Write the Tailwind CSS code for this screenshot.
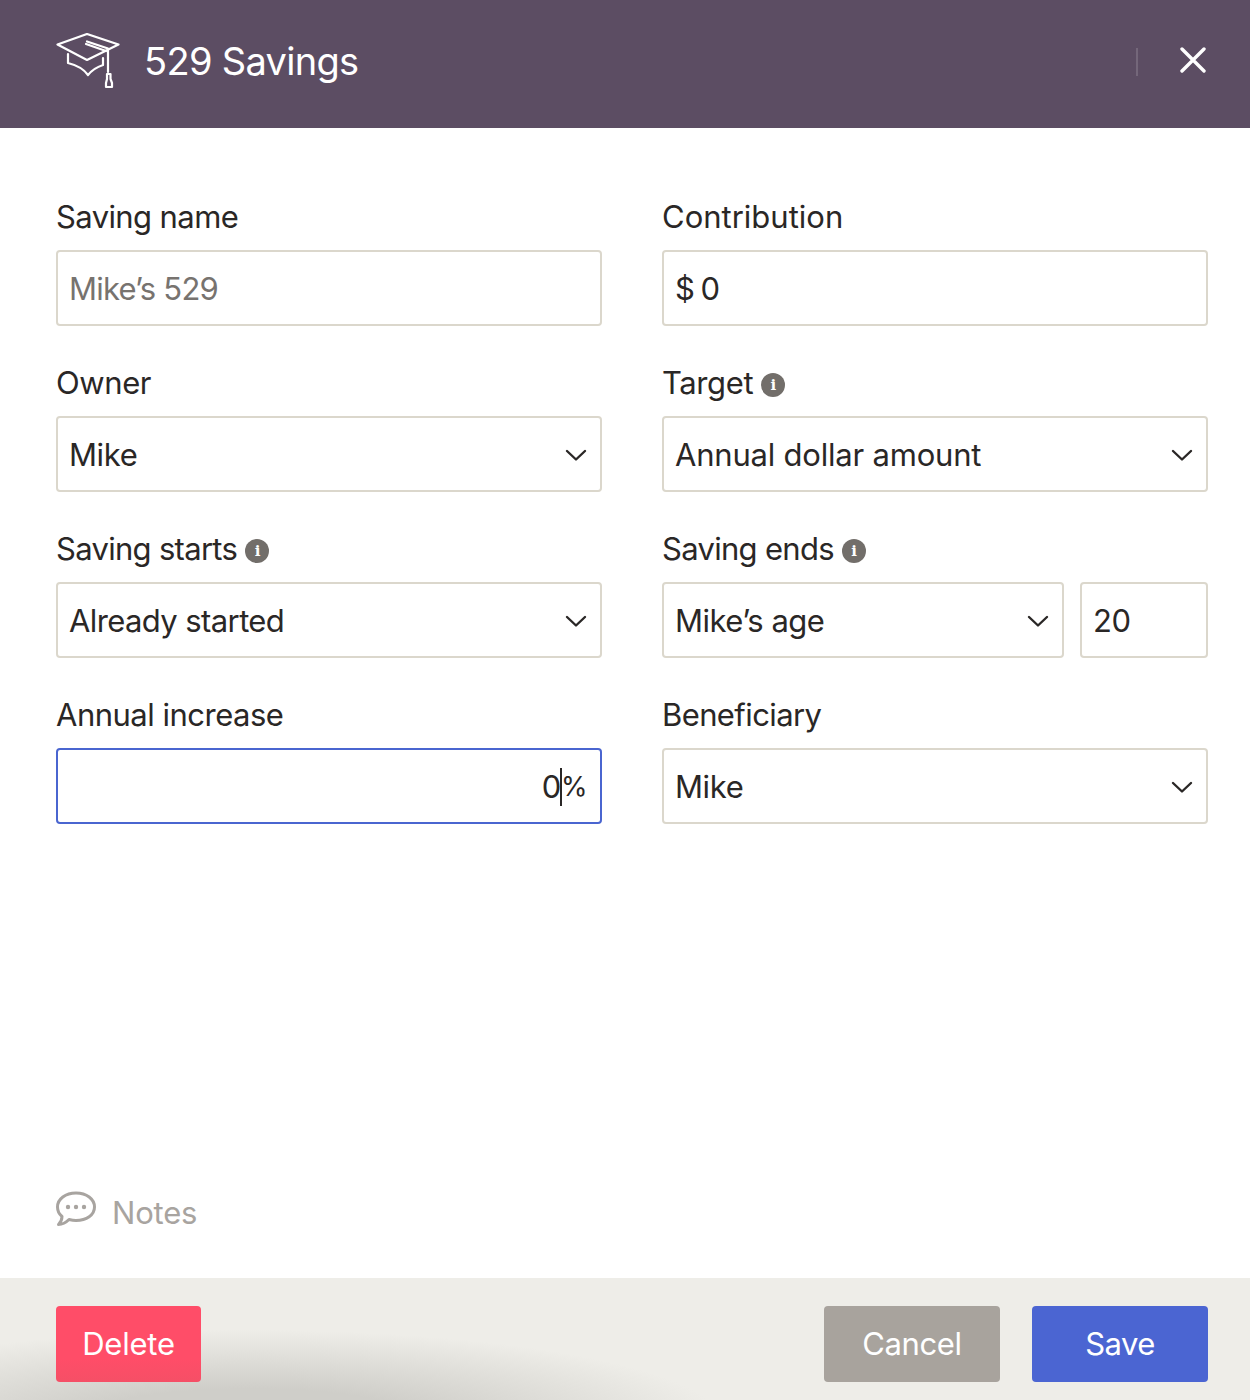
<!DOCTYPE html>
<html lang="en">
<head>
    <meta charset="UTF-8">
    <title>529 Savings</title>
    <script src="https://cdn.jsdelivr.net/npm/@tailwindcss/browser@4"></script>
</head>
<body class="bg-white">
    <div class="w-[1250px] h-[1400px] flex flex-col font-['Inter',sans-serif] text-[31px] tracking-[-0.4px] text-[#2a2726] overflow-hidden">

        <!-- header -->
        <div class="h-[128px] bg-[#5c4d63] flex items-center pl-[56px] pr-[44px] text-white">
            <svg class="w-[64px] h-[56px] mt-[-6px]" viewBox="0 0 64 56" fill="none" stroke="white" stroke-width="2.200" stroke-linejoin="round" stroke-linecap="round">
                <path d="M1.500 11.500 L31 1 L62.500 11.500 L31 27 Z"/>
                <path d="M31 8.500 L52 15.500 V39 M30 11 L50 18"/>
                <path d="M12 21 V30 C20 32 27 35 32 42 C36 37 41 34 47 32 V25"/>
                <path d="M50 54 H56 V50 L54.500 46 V41 H51 V46 L50 50 Z"/>
            </svg>
            <div class="ml-[24px] text-[38px] leading-none tracking-[-0.7px] mt-[-6px]">529 Savings</div>
            <div class="ml-auto w-[2px] h-[28px] bg-white/15 mr-[42px] mt-[-4px]"></div>
            <svg class="w-[26px] h-[26px] mt-[-8px]" viewBox="0 0 26 26" fill="none" stroke="white" stroke-width="3.400" stroke-linecap="round">
                <path d="M2 2 L24 24 M24 2 L2 24"/>
            </svg>
        </div>

        <!-- form -->
        <div class="flex-1 pl-[56px] pr-[42px] pt-[72px] grid grid-cols-2 gap-x-[60px] gap-y-[40px] content-start">

            <div>
                <div class="h-[32px] mb-[18px] flex items-center leading-none tracking-[-0.6px]">Saving name</div>
                <div class="h-[76px] border-2 border-[#dbd7cc] rounded-[4px] flex items-center pl-[11px] pr-[12px] pt-[2px] text-[#77736f] tracking-[-0.8px]">Mike’s 529</div>
            </div>

            <div>
                <div class="h-[32px] mb-[18px] flex items-center leading-none tracking-[0px]">Contribution</div>
                <div class="h-[76px] border-2 border-[#dbd7cc] rounded-[4px] flex items-center pl-[11px] pr-[12px] pt-[2px]">$<span class="ml-[6px]">0</span></div>
            </div>

            <div>
                <div class="h-[32px] mb-[18px] flex items-center leading-none">Owner</div>
                <div class="h-[76px] border-2 border-[#dbd7cc] rounded-[4px] flex items-center justify-between pl-[11px] pr-[13px] pt-[2px]">
                    Mike
                    <svg class="w-[22px] h-[14px] mt-[-1px]" viewBox="0 0 22 14" fill="none" stroke="#2a2726" stroke-width="2.400" stroke-linecap="round" stroke-linejoin="round"><path d="M2 3 L11 11.500 L20 3"/></svg>
                </div>
            </div>

            <div>
                <div class="h-[32px] mb-[18px] flex items-center leading-none">
                    Target
                    <span class="ml-[8px] mt-[6px] w-[24px] h-[24px] rounded-full bg-[#726e6a] text-white flex items-center justify-center text-[15px] font-bold font-['DejaVu_Serif',serif]">i</span>
                </div>
                <div class="h-[76px] border-2 border-[#dbd7cc] rounded-[4px] flex items-center justify-between pl-[11px] pr-[13px] pt-[2px] tracking-[-0.2px]">
                    Annual dollar amount
                    <svg class="w-[22px] h-[14px] mt-[-1px]" viewBox="0 0 22 14" fill="none" stroke="#2a2726" stroke-width="2.400" stroke-linecap="round" stroke-linejoin="round"><path d="M2 3 L11 11.500 L20 3"/></svg>
                </div>
            </div>

            <div>
                <div class="h-[32px] mb-[18px] flex items-center leading-none tracking-[-0.7px]">
                    Saving starts
                    <span class="ml-[8px] mt-[6px] w-[24px] h-[24px] rounded-full bg-[#726e6a] text-white flex items-center justify-center text-[15px] font-bold font-['DejaVu_Serif',serif]">i</span>
                </div>
                <div class="h-[76px] border-2 border-[#dbd7cc] rounded-[4px] flex items-center justify-between pl-[11px] pr-[13px] pt-[2px] tracking-[-0.6px]">
                    Already started
                    <svg class="w-[22px] h-[14px] mt-[-1px]" viewBox="0 0 22 14" fill="none" stroke="#2a2726" stroke-width="2.400" stroke-linecap="round" stroke-linejoin="round"><path d="M2 3 L11 11.500 L20 3"/></svg>
                </div>
            </div>

            <div>
                <div class="h-[32px] mb-[18px] flex items-center leading-none tracking-[-0.7px]">
                    Saving ends
                    <span class="ml-[8px] mt-[6px] w-[24px] h-[24px] rounded-full bg-[#726e6a] text-white flex items-center justify-center text-[15px] font-bold font-['DejaVu_Serif',serif]">i</span>
                </div>
                <div class="flex gap-[16px]">
                    <div class="w-[402px] h-[76px] border-2 border-[#dbd7cc] rounded-[4px] flex items-center justify-between pl-[11px] pr-[13px] pt-[2px] tracking-[-0.5px]">
                        Mike’s age
                        <svg class="w-[22px] h-[14px] mt-[-1px]" viewBox="0 0 22 14" fill="none" stroke="#2a2726" stroke-width="2.400" stroke-linecap="round" stroke-linejoin="round"><path d="M2 3 L11 11.500 L20 3"/></svg>
                    </div>
                    <div class="flex-1 h-[76px] border-2 border-[#dbd7cc] rounded-[4px] flex items-center pl-[11px] pr-[12px] pt-[2px]">20</div>
                </div>
            </div>

            <div>
                <div class="h-[32px] mb-[18px] flex items-center leading-none tracking-[-0.5px]">Annual increase</div>
                <div class="h-[76px] border-2 border-[#4a65d0] rounded-[4px] flex items-center justify-end pr-[13px] pt-[2px]">
                    0<span class="w-[2px] h-[38px] bg-[#2a2726] mx-[-1px]"></span><span class="text-[27px]">%</span>
                </div>
            </div>

            <div>
                <div class="h-[32px] mb-[18px] flex items-center leading-none tracking-[-0.6px]">Beneficiary</div>
                <div class="h-[76px] border-2 border-[#dbd7cc] rounded-[4px] flex items-center justify-between pl-[11px] pr-[13px] pt-[2px]">
                    Mike
                    <svg class="w-[22px] h-[14px] mt-[-1px]" viewBox="0 0 22 14" fill="none" stroke="#2a2726" stroke-width="2.400" stroke-linecap="round" stroke-linejoin="round"><path d="M2 3 L11 11.500 L20 3"/></svg>
                </div>
            </div>
        </div>

        <!-- notes -->
        <div class="h-[88px] pl-[56px] flex items-start text-[#a8a4a0]">
            <svg class="w-[40px] h-[36px] mt-[1px]" viewBox="0 0 40 36" fill="none" stroke="#a8a4a0" stroke-width="3" stroke-linejoin="round">
                <path d="M20 2 C30.500 2 38.500 8 38.500 16 C38.500 24 30.500 29.500 20 29.500 C17.500 29.500 15 29 13 28.500 C10 31.500 6.500 33.500 2.500 33.500 C5 31 6 28 6 25.500 C3 23 1.500 19.500 1.500 16 C1.500 8 9.500 2 20 2 Z"/>
                <circle cx="12" cy="16" r="2.200" fill="#a8a4a0" stroke="none"/>
                <circle cx="20" cy="16" r="2.200" fill="#a8a4a0" stroke="none"/>
                <circle cx="28" cy="16" r="2.200" fill="#a8a4a0" stroke="none"/>
            </svg>
            <div class="ml-[16px] leading-none mt-[7px] tracking-[-0.2px]">Notes</div>
        </div>

        <!-- footer -->
        <div class="relative h-[122px] bg-[#eeede8] flex items-start pt-[28px] pr-[42px] pl-[56px] overflow-hidden">
            <div class="absolute left-[-220px] top-[52px] w-[940px] h-[180px] bg-[radial-gradient(closest-side,#cfcec9_35%,#cfcec900)]"></div>
            <div class="relative w-[145px] h-[76px] rounded-[4px] bg-gradient-to-b from-[#ff4d68] from-70% to-[#f54f66] text-white tracking-[-0.2px] flex items-center justify-center">Delete</div>
            <div class="relative ml-auto w-[176px] h-[76px] rounded-[4px] bg-[#a8a39d] text-white flex items-center justify-center">Cancel</div>
            <div class="relative ml-[32px] w-[176px] h-[76px] rounded-[4px] bg-[#4b65d2] text-white tracking-[-0.6px] flex items-center justify-center">Save</div>
        </div>
    </div>
</body>
</html>
